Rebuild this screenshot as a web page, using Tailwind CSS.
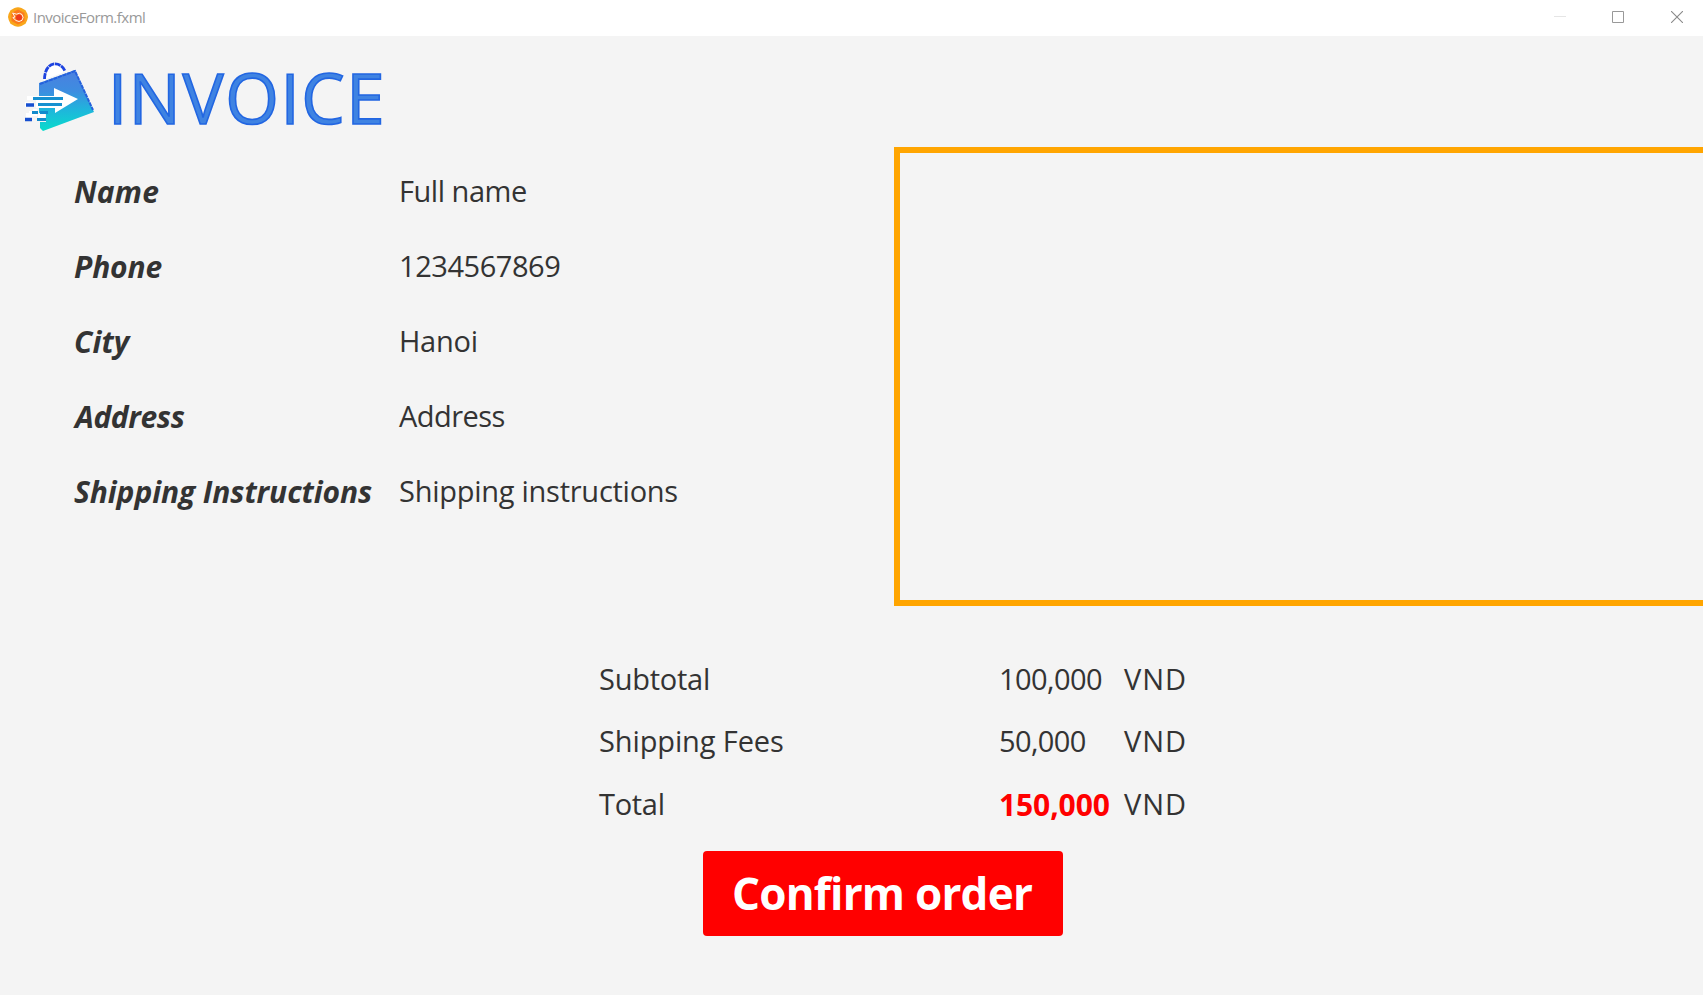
<!DOCTYPE html>
<html lang="en">
<head>
<meta charset="utf-8">
<title>InvoiceForm.fxml</title>
<script src="https://cdn.jsdelivr.net/npm/@tailwindcss/browser@4"></script>
</head>
<body class="flex h-[995px] w-[1703px] flex-col overflow-hidden bg-[#f4f4f4] font-['Open_Sans','Noto_Sans',sans-serif] text-[#333333]">
  <header class="flex h-9 shrink-0 items-center justify-between bg-white">
    <div class="flex items-center pb-0.5 pl-2">
      <svg class="size-5" viewBox="0 0 20 20">
        <path d="M6.5.9Q10-.6 13.500.9L17.500 3.300Q19.600 6.500 20 10Q19.600 13.500 17.500 16.700L13.500 19.100Q10 20.600 6.500 19.100L2.500 16.700Q.400 13.500 0 10Q.400 6.500 2.500 3.300Z" fill="#f9a61a"/>
        <path d="M10 2.500L16.500 6V14L10 17.500L3.500 14V6Z" fill="#fb7a1c"/>
        <circle cx="11" cy="10.500" r="3" fill="#ee3a1c"/>
        <path d="M4.600 6L8.500 7.200Q11.500 5.200 14 7.500Q16.200 10.500 14 13.300Q11 15.600 8 13.500L4.800 10.600L7 10L4.600 6Z" fill="none" stroke="#fff" stroke-opacity=".9" stroke-width="1" stroke-linejoin="round"/>
      </svg>
      <span class="pl-[5px] text-[15px] leading-none tracking-[-0.52px] text-[#999999]">InvoiceForm.fxml</span>
    </div>
    <div class="flex items-center gap-[46px] pb-0.5 pr-5">
      <svg class="h-3 w-3" viewBox="0 0 12 12"><path d="M0 5.500H12" stroke="#e5e5e5"/></svg>
      <svg class="h-3 w-3" viewBox="0 0 12 12"><path d="M.5.5H11.500V11.500H.5Z" fill="none" stroke="#999"/></svg>
      <svg class="ml-px h-3 w-3" viewBox="0 0 12 12"><path d="M0 0L12 12M12 0L0 12" stroke="#8a8a8a" stroke-width="1.100"/></svg>
    </div>
  </header>

  <section class="flex h-[111px] shrink-0 items-start pl-6">
    <svg class="mt-[26px] h-[70px] w-[72px]" viewBox="0 0 72 70">
      <defs>
        <linearGradient id="bag" x1="0" y1="0" x2="0" y2="1">
          <stop offset="0" stop-color="#4b7fe0"/>
          <stop offset=".35" stop-color="#3d8de0"/>
          <stop offset=".65" stop-color="#1fb5dc"/>
          <stop offset="1" stop-color="#08dccb"/>
        </linearGradient>
      </defs>
      <path d="M20 20C21 -1 37 -2 42 9L38 11L22 17Z" fill="#fff"/>
      <path d="M20.500 17C21 -1 36 -2 41 9" fill="none" stroke="#1d43e0" stroke-width="2.800" stroke-dasharray="6 .7"/>
      <path d="M15 21L51 8L70 50L19 69L16 66V60H22V51H15Z" fill="url(#bag)"/>
      <path d="M16 22L51 9L69 48" fill="none" stroke="#2460dc" stroke-width="2" stroke-dasharray="4 .8"/>
      <path d="M30 26L54 37L31 51V46H12V34H30Z" fill="#fff"/>
      <path d="M3 34H15V38H3ZM1 40H9V45H1ZM9 47H13V54H5V49H9ZM2 51H8V56H2ZM14 52H21V57H14Z" fill="#fff"/>
      <path d="M9 36.500H39M14 42.500H38" stroke="#1690d0" stroke-width="3"/>
      <path d="M2 43H10M1 57.500H8" stroke="#164fd0" stroke-width="3.500"/>
      <path d="M8 50.500H14M13 57.500H22M16 50.500H24" stroke="#138bcc" stroke-width="3"/>
    </svg>
    <h1 class="ml-3 mt-[21px] text-[69px] font-normal leading-[80px] tracking-[1.6px] text-[#3f83e2] [-webkit-text-stroke:1.6px_#2266e2]">INVOICE</h1>
  </section>

  <section class="flex h-[459px] shrink-0">
    <div class="grid w-[894px] shrink-0 auto-rows-[75px] grid-cols-[325px_1fr] content-start items-center whitespace-nowrap pl-[74px] pt-1.5 text-[29px]">
      <span class="pt-0.5 text-[30px] font-bold italic tracking-[0.2px]">Name</span><span class="tracking-[-0.47px]">Full name</span>
      <span class="pt-0.5 text-[30px] font-bold italic tracking-[-0.15px]">Phone</span><span class="tracking-[-0.45px]">1234567869</span>
      <span class="pt-0.5 text-[30px] font-bold italic tracking-[0.1px]">City</span><span class="tracking-[-0.27px]">Hanoi</span>
      <span class="pt-0.5 pl-px text-[30px] font-bold italic tracking-[-0.4px]">Address</span><span class="tracking-[-0.56px]">Address</span>
      <span class="pt-0.5 text-[30px] font-bold italic tracking-[-0.1px]">Shipping Instructions</span><span class="tracking-[-0.26px]">Shipping instructions</span>
    </div>
    <div class="h-[459px] flex-1 border-6 border-r-0 border-[#ffa500]"></div>
  </section>

  <section class="mt-[41px] grid h-[188px] shrink-0 grid-cols-[400px_125px_auto] grid-rows-[63px_62px_63px] items-center whitespace-nowrap pl-[599px] text-[29px]">
    <span class="tracking-[-0.25px]">Subtotal</span><span class="tracking-[-0.57px]">100,000</span><span class="tracking-[1px]">VND</span>
    <span class="tracking-[-0.12px]">Shipping Fees</span><span class="tracking-[-0.6px]">50,000</span><span class="tracking-[1px]">VND</span>
    <span class="tracking-[-0.3px]">Total</span><span class="pt-px text-[30px] font-bold tracking-[-0.1px] text-[#ff0000]">150,000</span><span class="tracking-[1px]">VND</span>
  </section>

  <button class="ml-[703px] mt-4 flex h-[85px] w-[360px] shrink-0 items-center justify-center rounded-[4px] bg-[#ff0000] pb-px pr-0.5 text-[44px] font-bold leading-none tracking-[-0.78px] text-white">Confirm order</button>
</body>
</html>
